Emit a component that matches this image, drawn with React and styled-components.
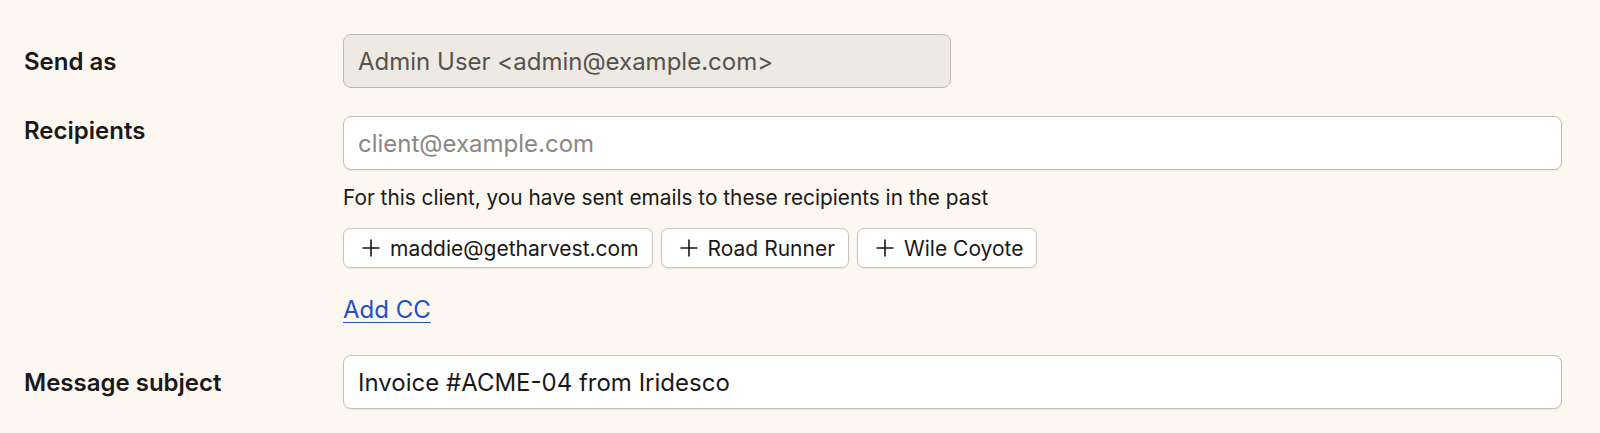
import React from "react";
import styled, { createGlobalStyle } from "styled-components";

const GlobalStyle = createGlobalStyle`
  body {
    margin: 0;
    background: #fcf7f1;
    font-family: Inter, "Liberation Sans", sans-serif;
    color: #1d1b19;
  }
`;

const Form = styled.div`
  padding: 34px 38px 24px 24px;
  display: flex;
  flex-direction: column;
  gap: 28px;
`;

const Row = styled.div`
  display: grid;
  grid-template-columns: 319px 1fr;
  align-items: ${(p) => (p.top ? "start" : "center")};
`;

const Label = styled.label`
  font-size: 24px;
  font-weight: 600;
  line-height: 29px;
  color: #1a1917;
`;

const Field = styled.div`
  display: flex;
  flex-direction: column;
  align-items: flex-start;
`;

const Input = styled.input`
  box-sizing: border-box;
  width: ${(p) => p.width || "100%"};
  height: 54px;
  padding: 0 14px;
  border: 1px solid ${(p) => (p.disabled ? "#bdb8b1" : "#c4bfb8")};
  border-radius: 8px;
  background: ${(p) => (p.disabled ? "#ede9e3" : "#fff")};
  color: ${(p) => (p.disabled ? "#57524d" : "#1a1917")};
  font-family: inherit;
  font-size: 24px;
  box-shadow: ${(p) => (p.disabled ? "none" : "0 1px 2px rgba(0,0,0,0.07)")};
  &::placeholder {
    color: #8c8782;
  }
  &:disabled {
    opacity: 1;
  }
`;

const Hint = styled.p`
  margin: 16px 0 0;
  font-size: 20.8px;
  line-height: 24px;
  color: #1a1917;
`;

const Chips = styled.div`
  display: flex;
  gap: 8px;
  margin-top: 18px;
`;

const Chip = styled.button`
  box-sizing: border-box;
  height: 40px;
  display: flex;
  align-items: center;
  gap: 10px;
  padding: 0 13px 0 18px;
  border: 1px solid #c9c4bd;
  border-radius: 7px;
  background: #fff;
  font-family: inherit;
  font-size: 21px;
  color: #1a1917;
  box-shadow: 0 1px 2px rgba(0, 0, 0, 0.07);
  cursor: pointer;
`;

const AddLink = styled.a`
  margin: 27px 0 3px;
  font-size: 24px;
  line-height: 29px;
  color: #2250c4;
  text-decoration: underline;
  text-underline-offset: 4px;
  text-decoration-thickness: 1px;
  cursor: pointer;
`;

const Plus = () => (
  <svg width="18" height="18" viewBox="0 0 18 18" fill="none" stroke="#1a1917" strokeWidth="1.6">
    <path d="M9 0.5v17M0.5 9h17" />
  </svg>
);

const recipients = ["maddie@getharvest.com", "Road Runner", "Wile Coyote"];

export default function App() {
  return (
    <>
      <GlobalStyle />
      <Form>
        <Row>
          <Label>Send as</Label>
          <Input width="608px" disabled value="Admin User <admin@example.com>" readOnly />
        </Row>
        <Row top>
          <Label>Recipients</Label>
          <Field>
            <Input placeholder="client@example.com" />
            <Hint>For this client, you have sent emails to these recipients in the past</Hint>
            <Chips>
              {recipients.map((r) => (
                <Chip key={r}>
                  <Plus />
                  {r}
                </Chip>
              ))}
            </Chips>
            <AddLink>Add CC</AddLink>
          </Field>
        </Row>
        <Row>
          <Label>Message subject</Label>
          <Input defaultValue="Invoice #ACME-04 from Iridesco" />
        </Row>
      </Form>
    </>
  );
}
